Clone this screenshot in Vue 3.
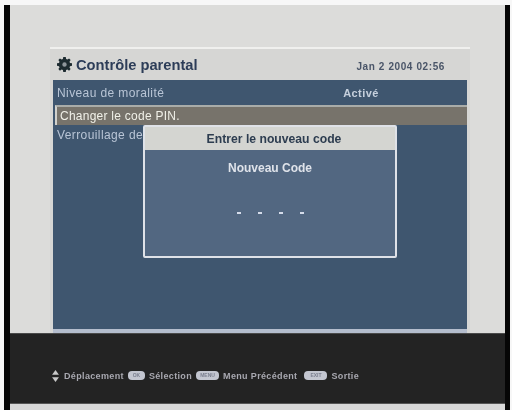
<template>
  <div class="frame">
    <div class="screen">
      <div class="stage">
        <section class="panel">
          <header class="panel-head">
            <svg class="gear" viewBox="0 0 24 24" aria-hidden="true">
              <path d="M10 0h4l.6 3.200 2 .8L19.300 2.200 21.800 4.700 20 7.400l.8 2 3.200.6v4l-3.200.6-.8 2 1.800 2.700-2.500 2.500-2.700-1.800-2 .8L14 24h-4l-.6-3.200-2-.8-2.700 1.800-2.500-2.500L4 16.600l-.8-2L0 14v-4l3.200-.6.8-2L2.200 4.700 4.700 2.200 7.400 4l2-.8z" />
              <circle cx="12" cy="12" r="3.500" fill="#8f979c" />
            </svg>
            <h1 class="title">Contrôle parental</h1>
            <span class="clock">Jan 2 2004 02:56</span>
          </header>
          <div class="panel-body">
            <div class="row row-first">
              <span class="row-label">Niveau de moralité</span>
              <span class="row-value">Activé</span>
            </div>
            <div class="row row-selected">
              <span class="row-label">Changer le code PIN.</span>
            </div>
            <div class="row">
              <span class="row-label">Verrouillage de</span>
            </div>
            <div class="dialog">
              <div class="dialog-head">Entrer le nouveau code</div>
              <div class="dialog-body">
                <div class="dialog-label">Nouveau Code</div>
                <div class="pin">
                  <span v-for="n in 4" :key="n" class="pin-dot"></span>
                </div>
              </div>
            </div>
          </div>
        </section>
      </div>
      <footer class="help">
        <svg class="arrows" viewBox="0 0 8 14" aria-hidden="true">
          <path d="M4 0 8 5.500H0zM4 14 0 8.500h8z" />
        </svg>
        <span class="help-first">Déplacement</span>
        <span class="key">OK</span>
        <span>Sélection</span>
        <span class="key key-wide">MENU</span>
        <span>Menu Précédent</span>
        <span class="key key-wide key-exit">EXIT</span>
        <span>Sortie</span>
      </footer>
      <div class="strip"></div>
    </div>
  </div>
</template>

<script setup>
</script>

<style>
html, body {
  margin: 0;
  background: #f7f7f7;
}
</style>

<style scoped>
.frame {
  width: 512px;
  height: 410px;
  box-sizing: border-box;
  padding: 5px 2px 0 4px;
  background: #f7f7f7;
  overflow: hidden;
  font-family: "Liberation Sans", Arial, sans-serif;
}

.screen {
  height: 405px;
  display: flex;
  flex-direction: column;
  background: #0a0a0a;
  border-left: 6px solid #060606;
  border-right: 5px solid #060606;
  filter: blur(0.6px);
}

.stage {
  height: 328px;
  box-sizing: border-box;
  padding: 42px 35px 0 40px;
  background: #dcdcda;
}

.panel {
  height: 286px;
  display: flex;
  flex-direction: column;
  border-top: 2px solid #f0f0ee;
  box-sizing: border-box;
  background: #d6d6d4;
  padding: 0 3px;
}

.panel-head {
  height: 31px;
  flex: none;
  display: flex;
  align-items: center;
  padding: 0 22px 0 4px;
}

.gear {
  width: 15px;
  height: 15px;
  margin-right: 4px;
  fill: #1d2b30;
}

.title {
  margin: 0;
  font-size: 14.700px;
  font-weight: 700;
  color: #2d3d58;
}

.clock {
  margin-left: auto;
  padding-top: 3px;
  font-size: 10px;
  font-weight: 700;
  letter-spacing: 0.6px;
  color: #4a5568;
}

.panel-body {
  position: relative;
  flex: 1;
  background: #3f566f;
  border-bottom: 4px solid #b4bdcd;
}

.row {
  height: 20px;
  display: flex;
  align-items: center;
  padding-left: 4px;
  font-size: 12px;
  letter-spacing: 0.4px;
  color: #b9c5d6;
}

.row-first {
  height: 25px;
}

.row-selected {
  height: 20px;
  margin-left: 2px;
  padding-left: 3px;
  background: #77736b;
  border-top: 2px solid #a9aca9;
  border-left: 2px solid #d0d0cc;
  box-sizing: border-box;
  letter-spacing: 0.25px;
  color: #f0f0e8;
}

.row-value {
  margin-left: 179px;
  color: #c6d0dd;
  font-weight: 700;
  font-size: 11px;
}

.dialog {
  position: absolute;
  left: 90px;
  top: 45px;
  width: 254px;
  height: 133px;
  box-sizing: border-box;
  display: flex;
  flex-direction: column;
  border: 2px solid #dfe2e8;
  border-radius: 2px;
  background: #526781;
}

.dialog-head {
  height: 23px;
  flex: none;
  display: flex;
  align-items: center;
  justify-content: center;
  padding-left: 8px;
  background: #d4d5d1;
  color: #2d3d50;
  font-size: 12.200px;
  font-weight: 700;
}

.dialog-body {
  flex: 1;
  display: flex;
  flex-direction: column;
  align-items: center;
  padding-top: 11px;
}

.dialog-label {
  font-size: 12px;
  font-weight: 700;
  color: #dfe3ea;
}

.pin {
  display: flex;
  gap: 17px;
  margin-top: 37px;
}

.pin-dot {
  width: 4px;
  height: 2px;
  background: #d5dcea;
}

.help {
  height: 70px;
  flex: none;
  box-sizing: border-box;
  display: flex;
  align-items: center;
  gap: 4px;
  padding: 14px 0 0 42px;
  background: #232323;
  border-top: 1px solid #4a4a4a;
  font-size: 9px;
  font-weight: 700;
  letter-spacing: 0.35px;
  color: #a8a8b0;
}

.arrows {
  width: 7px;
  height: 12px;
  fill: #c8c8c8;
}

.help-first {
  margin-left: 1px;
}

.key {
  width: 17px;
  height: 9px;
  border-radius: 4px;
  background: #c3c6d0;
  color: #7c8090;
  font-size: 5px;
  line-height: 9px;
  text-align: center;
  letter-spacing: 0;
}

.key-wide {
  width: 23px;
}

.key-exit {
  margin-left: 3px;
}

.strip {
  flex: 1;
  background: #d8d8d8;
  border-top: 1px solid #555;
}
</style>
